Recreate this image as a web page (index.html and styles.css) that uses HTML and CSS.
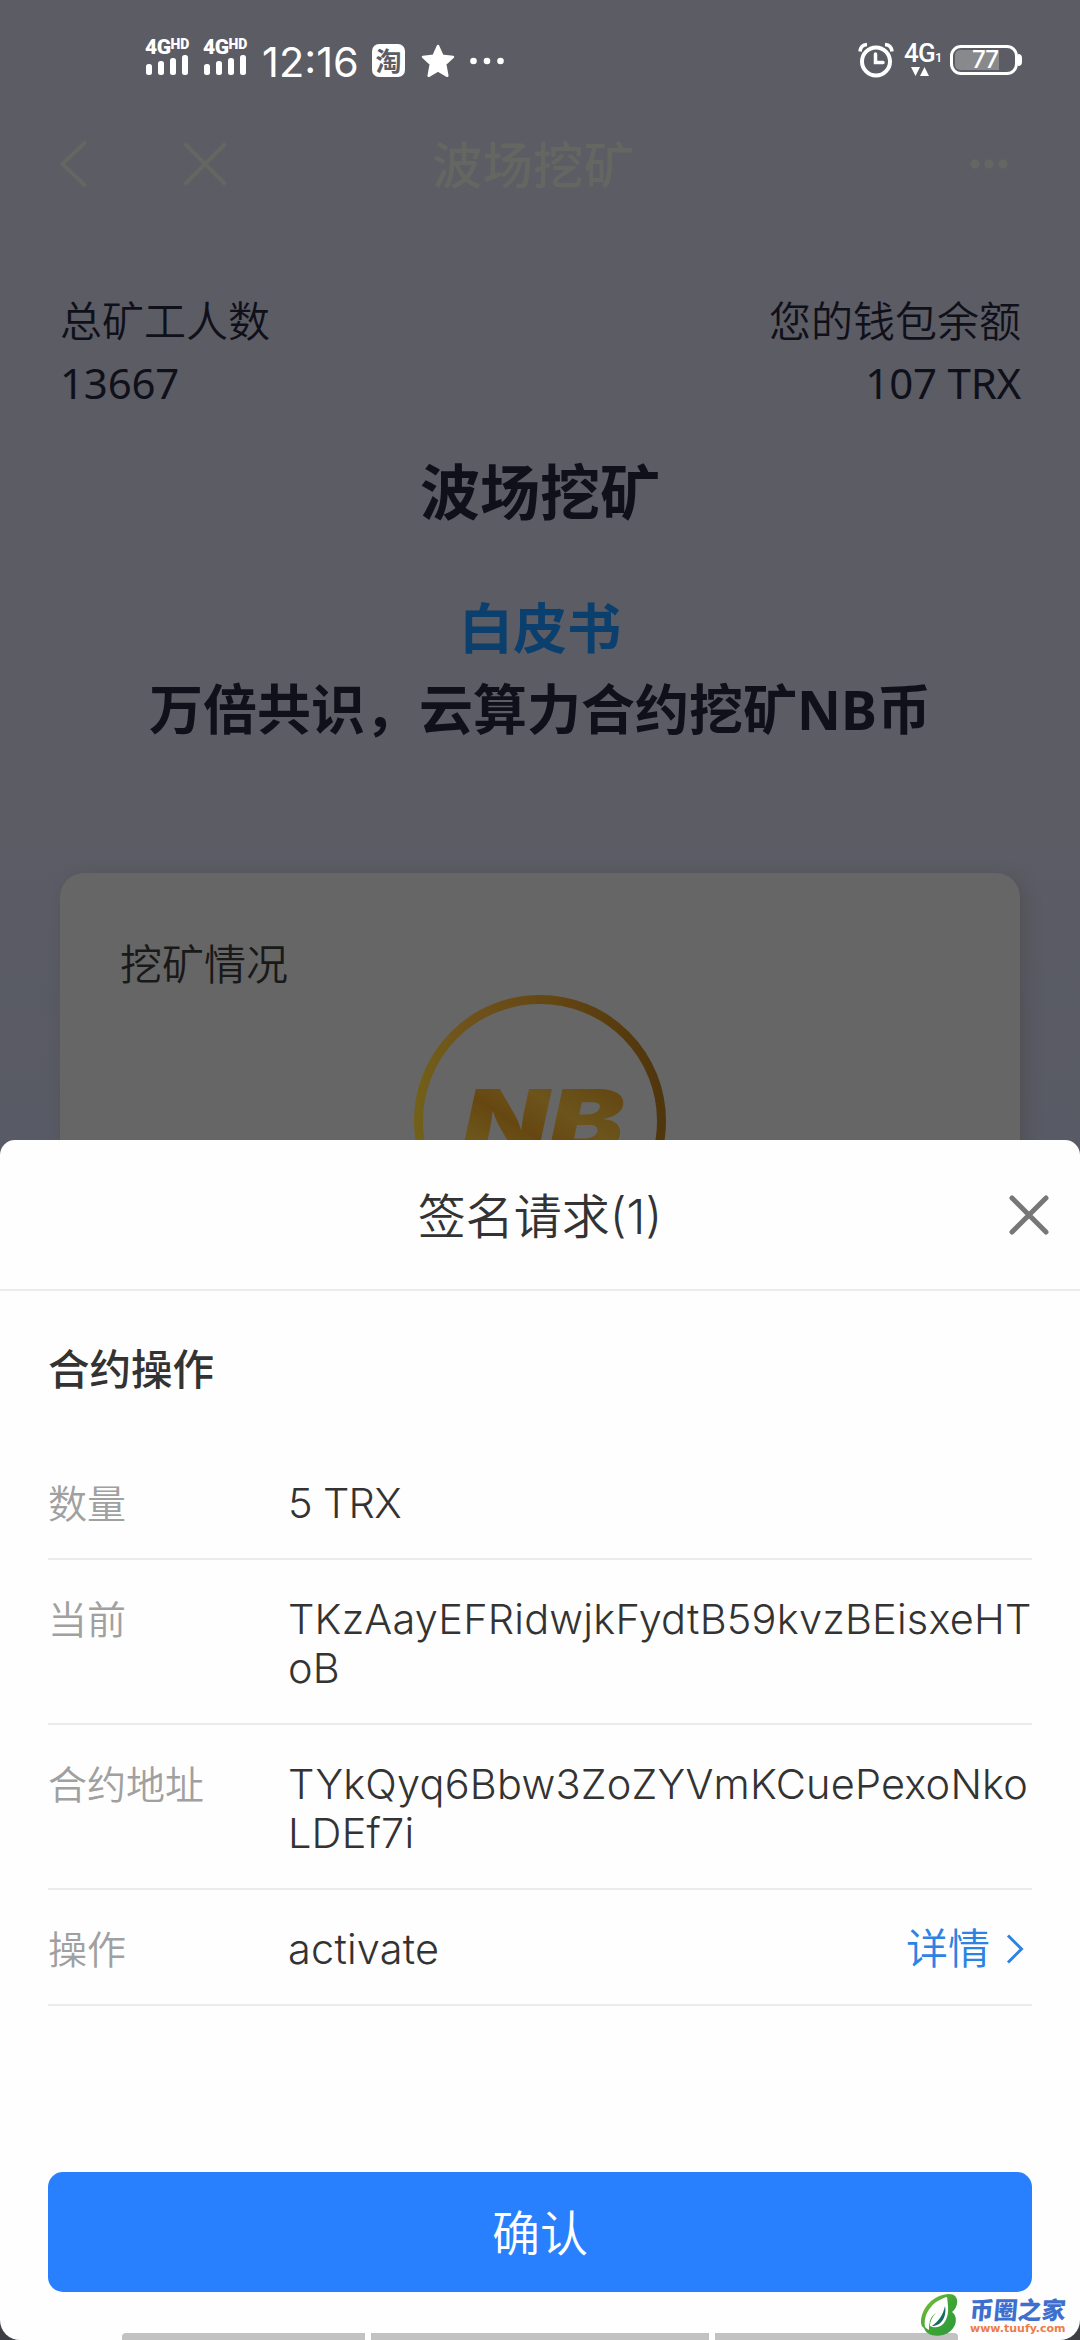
FILE: index.html
```html
<!DOCTYPE html>
<html lang="zh-CN">
<head>
<meta charset="utf-8">
<title>波场挖矿</title>
<link rel="stylesheet" href="styles.css">
</head>
<body>
<div class="screen">
  <section class="page">
    <div class="statusbar">
      <div class="signal">
        <span class="net">4G<sup>HD</sup></span>
        <svg width="42" height="20" viewBox="0 0 42 20" fill="#fff"><rect y="9" width="6" height="11" rx="2.5"/><rect x="12" y="6" width="6" height="14" rx="2.5"/><rect x="24" y="3" width="6" height="17" rx="2.5"/><rect x="36" width="6" height="20" rx="2.5"/></svg>
      </div>
      <div class="signal">
        <span class="net">4G<sup>HD</sup></span>
        <svg width="42" height="20" viewBox="0 0 42 20" fill="#fff"><rect y="9" width="6" height="11" rx="2.5"/><rect x="12" y="6" width="6" height="14" rx="2.5"/><rect x="24" y="3" width="6" height="17" rx="2.5"/><rect x="36" width="6" height="20" rx="2.5"/></svg>
      </div>
      <span class="clock">12:16</span>
      <span class="tao">淘</span>
      <svg class="star" width="34" height="34" viewBox="0 0 34 34"><path d="M17 2l4.4 9.8 10.6 1.1-7.8 7.3 2.100 11.600L17 26.400l-9.300 5.400 2.100-11.600L2 12.900l10.600-1.100z" fill="#fff" stroke="#fff" stroke-width="2.500" stroke-linejoin="round"/></svg>
      <svg class="notes" width="34" height="8" viewBox="0 0 34 8" fill="#fff"><circle cx="3.500" cy="4" r="3.300"/><circle cx="17" cy="4" r="3.300"/><circle cx="30.500" cy="4" r="3.300"/></svg>
      <svg class="alarm" width="36" height="36" viewBox="0 0 36 36" fill="none" stroke="#fff"><circle cx="18" cy="19.500" r="14" stroke-width="4"/><path d="M17.500 12v8.500H25" stroke-width="3.500" stroke-linecap="round"/><path d="M2 9.500Q2.500 3 9 2.500" stroke-width="3.500"/><path d="M34 9.500Q33.500 3 27 2.500" stroke-width="3.500"/></svg>
      <div class="data">
        <span class="data-net">4G<small>1</small></span>
        <svg width="18" height="9" viewBox="0 0 18 9" fill="#fff"><path d="M0 0h9L4.500 9zM9 9h9L13.500 0z"/></svg>
      </div>
      <div class="battery"><span class="battery-level">77</span></div>
    </div>
    <div class="navbar">
      <svg width="28" height="48" viewBox="0 0 28 48" fill="none" stroke="#656562" stroke-width="4"><path d="M26 1.500L2.500 24 26 46.500"/></svg>
      <svg class="nav-close" width="44" height="44" viewBox="0 0 44 44" fill="none" stroke="#656562" stroke-width="4"><path d="M1.500 1.500l41 41M42.500 1.500l-41 41"/></svg>
      <span class="nav-title">波场挖矿</span>
      <svg class="nav-more" width="38" height="10" viewBox="0 0 38 10" fill="#656562"><circle cx="5" cy="5" r="4.700"/><circle cx="19" cy="5" r="4.700"/><circle cx="33" cy="5" r="4.700"/></svg>
    </div>
    <div class="stats">
      <div>总矿工人数<br><span class="figure">13667</span></div>
      <div class="balance">您的钱包余额<br><span class="figure">107 TRX</span></div>
    </div>
    <h1 class="headline">波场挖矿</h1>
    <div class="whitepaper">白皮书</div>
    <div class="slogan">万倍共识，云算力合约挖矿NB币</div>
    <div class="card">
      <div class="card-title">挖矿情况</div>
      <svg class="coin" width="252" height="252" viewBox="0 0 252 252">
        <defs>
          <linearGradient id="ring" x1="0" y1="0.500" x2="1" y2="0.400"><stop offset="0" stop-color="#716019"/><stop offset=".25" stop-color="#6f511c"/><stop offset=".6" stop-color="#644612"/><stop offset="1" stop-color="#50360d"/></linearGradient>
          <linearGradient id="gold" x1="0" y1="1" x2="1" y2="0"><stop offset="0" stop-color="#5f4a0f"/><stop offset=".2" stop-color="#6c561b"/><stop offset=".4" stop-color="#674711"/><stop offset=".6" stop-color="#6c541b"/><stop offset="1" stop-color="#60410f"/></linearGradient>
        </defs>
        <circle cx="126" cy="126" r="121.500" fill="none" stroke="url(#ring)" stroke-width="9"/>
        <text class="coin-text" x="48" y="157" textLength="162" lengthAdjust="spacingAndGlyphs" fill="url(#gold)">NB</text>
      </svg>
    </div>
  </section>
  <section class="sheet">
    <header class="sheet-head">
      <span class="sheet-title">签名请求<span class="count">(1)</span></span>
      <svg class="sheet-close" width="40" height="40" viewBox="0 0 40 40" fill="none" stroke="#777" stroke-width="5" stroke-linecap="round"><path d="M3 3l34 34M37 3L3 37"/></svg>
    </header>
    <div class="sheet-body">
      <h2 class="group">合约操作</h2>
      <div class="row"><span class="label">数量</span><span class="value amount">5 TRX</span></div>
      <div class="row"><span class="label">当前</span><span class="value">TKzAayEFRidwjkFydtB59kvzBEisxeHT<br>oB</span></div>
      <div class="row"><span class="label">合约地址</span><span class="value">TYkQyq6Bbw3ZoZYVmKCuePexoNko<br>LDEf7i</span></div>
      <div class="row"><span class="label">操作</span><span class="value">activate</span>
        <span class="detail">详情<svg width="18" height="30" viewBox="0 0 18 30" fill="none" stroke="#2b83e3" stroke-width="3"><path d="M2 1.500L15.500 15 2 28.500"/></svg></span>
      </div>
    </div>
    <button class="confirm">确认</button>
    <div class="gesture"><i></i><i class="mid"></i><i></i></div>
  </section>
  <div class="watermark">
    <svg width="40" height="44" viewBox="0 0 40 44">
      <defs><linearGradient id="leaf" x1="0" y1="0" x2="1" y2="1"><stop offset="0" stop-color="#8cc63f"/><stop offset=".5" stop-color="#3fa535"/><stop offset="1" stop-color="#2f9a3c"/></linearGradient></defs>
      <path d="M1 29C1 15 14 1 29 1c11 0 10 13 3 18 8 6 3 20-9 23-8 2-17 0-19-7C2 34 1 32 1 29z" fill="url(#leaf)"/>
      <path d="M5 34C3 21 12 8 27 4c1 9 3 18-3 26-4 5-10 5-14 3 0-5 3-10 6-13C11 23 9 28 9 37 7 36 6 35 5 34z" fill="#fff"/>
      <path d="M25 13c2 10-3 20-13 20 7-5 11-11 13-20z" fill="#176b61"/>
    </svg>
    <div class="brand"><b>币圈之家</b><span>www.tuufy.com</span></div>
  </div>
</div>
</body>
</html>
```
FILE: styles.css
```css
* { box-sizing: border-box; }
body { margin: 0; background: #3e3f45; }
svg { display: block; flex: none; }
.screen {
  position: relative;
  width: 1080px;
  height: 2340px;
  overflow: hidden;
  font-family: "Noto Sans", "Noto Sans CJK SC", sans-serif;
}
.page {
  height: 1155px;
  overflow: hidden;
  background: linear-gradient(#5b5c64 0, #5b5c64 850px, #585a65 1140px);
  color: #10101a;
}

/* status bar */
.statusbar { display: flex; height: 118px; padding: 40px 58px 0 145px; color: #fff; font-family: Inter, sans-serif; }
.signal { width: 58px; padding-left: 1px; }
.net { display: block; height: 15px; margin-left: -1px; font: 900 21px/15px Roboto, sans-serif; letter-spacing: -0.5px; white-space: nowrap; }
.net sup { font-size: 14px; line-height: 0; vertical-align: 5px; letter-spacing: 0; }
.clock { width: 111px; padding-left: 1px; font-size: 41.5px; line-height: 44px; letter-spacing: 0; }
.tao { width: 33px; height: 33px; margin-top: 4px; border-radius: 7px; background: #fff; color: #5b5c64; font: 700 26px/31px "Noto Sans CJK SC", sans-serif; text-align: center; }
.star { margin: 4px 0 0 16px; }
.notes { margin: 17px 0 0 15px; }
.alarm { margin: 2px 0 0 auto; }
.data { width: 34px; margin: 4px 0 0 10px; }
.data-net { display: block; height: 23px; font: 500 26px/19px Roboto, sans-serif; letter-spacing: -0.8px; white-space: nowrap; }
.data-net small { font-size: 13px; }
.data svg { margin-left: 7px; }
.battery { position: relative; width: 68px; height: 30px; margin: 5px 4px 0 12px; padding: 2px; border: 3px solid #fff; border-radius: 11px; }
.battery::after { content: ""; position: absolute; right: -7px; top: 6px; width: 4px; height: 12px; border-radius: 0 4px 4px 0; background: #fff; }
.battery-level { display: block; width: 44px; height: 20px; padding-right: 1px; border-radius: 5px 0 0 5px; background: #88898c; font-size: 24px; line-height: 20px; font-weight: 500; text-align: right; letter-spacing: -1px; }

/* navigation */
.navbar { display: flex; align-items: center; height: 92px; padding: 0 72px 0 60px; color: #656562; }
.nav-close { margin-left: 95px; }
.nav-title { margin: 1px 0 0 205px; font-size: 50.5px; line-height: 60px; font-weight: 500; }
.nav-more { margin-left: auto; }

.stats { display: flex; justify-content: space-between; padding: 80px 59px 0 60px; font-size: 42px; font-weight: 350; line-height: 62px; }
.figure { font-weight: 400; letter-spacing: -0.2px; }
.balance { text-align: right; }
.headline { margin: 38px 0 0; font-size: 60px; line-height: 80px; font-weight: 700; text-align: center; }
.whitepaper { margin-top: 56px; color: #0b3f6d; font-size: 54px; line-height: 81px; font-weight: 700; text-align: center; }
.slogan { font-size: 54px; line-height: 81px; font-weight: 700; text-align: center; }

.card { height: 400px; margin: 123px 60px 0; padding: 60px; border-radius: 24px; background: #666; box-shadow: 5px 5px 16px rgba(70, 65, 60, .4); color: #191919; }
.card-title { height: 62px; font-size: 42px; font-weight: 350; line-height: 62px; }
.coin { margin: 0 auto; }
.coin-text { font: italic 900 86px Inter, sans-serif; }

/* signature sheet */
.sheet {
  position: relative;
  display: flex;
  flex-direction: column;
  height: 1200px;
  margin-top: -15px;
  border-radius: 15px 15px 20px 20px;
  background: #fefefe;
  color: #333;
  font-family: Inter, "Noto Sans CJK SC", sans-serif;
}
.sheet-head { display: flex; align-items: center; height: 151px; padding: 0 31px 0 71px; border-bottom: 2px solid #ebebeb; }
.sheet-title { flex: 1; padding-top: 5px; font-size: 48px; font-weight: 350; line-height: 60px; text-align: center; }
.count { font-weight: 300; }
.sheet-body { flex: 1; padding: 0 48px; }
.group { height: 153px; margin: 0; padding-top: 49px; font-size: 41.5px; line-height: 60px; font-weight: 500; }
.row { display: flex; padding: 35px 0 30px; border-bottom: 2px solid #ebebeb; line-height: 49px; }
.label { width: 240px; height: 49px; color: #a0a0a0; font-size: 39px; font-weight: 350; }
.value { font-size: 41.5px; font-weight: 300; letter-spacing: 0.2px; white-space: nowrap; }
.amount { letter-spacing: -0.7px; }
.detail { display: flex; align-items: center; gap: 16px; height: 47px; margin-left: auto; padding-right: 8px; color: #2b83e3; font-size: 42px; font-weight: 350; }
.confirm { height: 120px; margin: 0 48px; padding: 0 0 4px; border: 0; border-radius: 15px; background: #2880ff; color: #fff; font: 350 48px/60px "Noto Sans CJK SC", sans-serif; }
.gesture { display: flex; gap: 6px; width: 836px; height: 7px; margin: 41px auto 0; }
.gesture i { width: 243px; background: #c2c2c2; border-radius: 4px 0 0 0; }
.gesture .mid { width: 338px; border-radius: 0; }
.gesture i:last-child { border-radius: 0 4px 0 0; }

/* site mark */
.watermark { position: absolute; left: 920px; top: 2293px; display: flex; gap: 10px; }
.brand { display: flex; flex-direction: column; }
.brand b { height: 29px; color: #3e6fce; font: 900 24px/32px "Noto Sans CJK SC", sans-serif; transform: skewX(-5deg); }
.brand span { color: #ee7c48; font: 700 11px/14px "DejaVu Sans", sans-serif; }
```
